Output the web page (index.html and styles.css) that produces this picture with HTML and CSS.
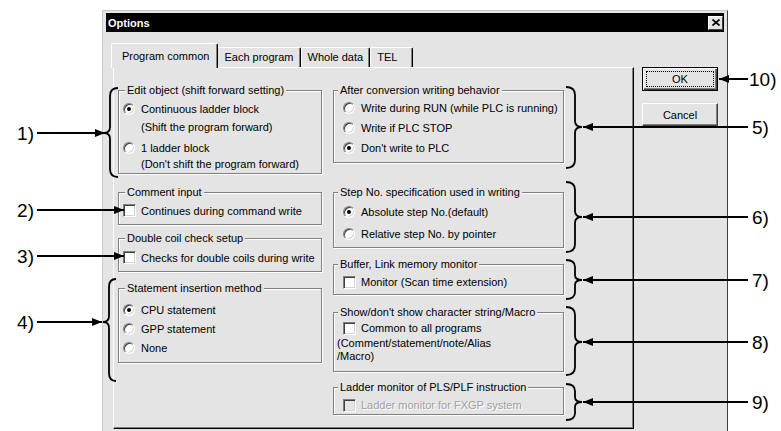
FILE: index.html
```html
<!DOCTYPE html>
<html lang="en">
<head>
    <meta charset="UTF-8">
    <title>Options</title>
    <link rel="stylesheet" href="styles.css">
</head>
<body>

<div class="dialog">
    <div class="titlebar">
        <span class="title">Options</span>
        <span class="close">
            <svg width="8" height="7" viewBox="0 0 8 7"><path d="M0.5 0.5L7.5 6.5M7.5 0.5L0.5 6.5" stroke="#000" stroke-width="1.6"/></svg>
        </span>
    </div>

    <div class="dialog-body">
        <div class="tabs">
            <div class="tab-strip">
                <div class="tab tab-active">Program common</div>
                <div class="tab">Each program</div>
                <div class="tab">Whole data</div>
                <div class="tab tab-tel">TEL</div>
            </div>

            <div class="tab-panel">
                <div class="col col-left">
                    <fieldset class="g-edit">
                        <legend>Edit object (shift forward setting)</legend>
                        <div class="opt"><span class="radio on"></span>Continuous ladder block</div>
                        <div class="note">(Shift the program forward)</div>
                        <div class="opt"><span class="radio"></span>1 ladder block</div>
                        <div class="note">(Don't shift the program forward)</div>
                    </fieldset>

                    <fieldset class="g-comment">
                        <legend>Comment input</legend>
                        <div class="opt"><span class="check"></span>Continues during command write</div>
                    </fieldset>

                    <fieldset class="g-coil">
                        <legend>Double coil check setup</legend>
                        <div class="opt"><span class="check"></span>Checks for double coils during write</div>
                    </fieldset>

                    <fieldset class="g-statement">
                        <legend>Statement insertion method</legend>
                        <div class="opt"><span class="radio on"></span>CPU statement</div>
                        <div class="opt"><span class="radio"></span>GPP statement</div>
                        <div class="opt"><span class="radio"></span>None</div>
                    </fieldset>
                </div>

                <div class="col col-right">
                    <fieldset class="g-after">
                        <legend>After conversion writing behavior</legend>
                        <div class="opt"><span class="radio"></span>Write during RUN (while PLC is running)</div>
                        <div class="opt"><span class="radio"></span>Write if PLC STOP</div>
                        <div class="opt"><span class="radio on"></span>Don't write to PLC</div>
                    </fieldset>

                    <fieldset class="g-step">
                        <legend>Step No. specification used in writing</legend>
                        <div class="opt"><span class="radio on"></span>Absolute step No.(default)</div>
                        <div class="opt"><span class="radio"></span>Relative step No. by pointer</div>
                    </fieldset>

                    <fieldset class="g-buffer">
                        <legend>Buffer, Link memory monitor</legend>
                        <div class="opt"><span class="check"></span>Monitor (Scan time extension)</div>
                    </fieldset>

                    <fieldset class="g-show">
                        <legend>Show/don't show character string/Macro</legend>
                        <div class="opt"><span class="check"></span>Common to all programs</div>
                        <div class="note-flush">(Comment/statement/note/Alias</div>
                        <div class="note-flush">/Macro)</div>
                    </fieldset>

                    <fieldset class="g-ladder">
                        <legend>Ladder monitor of PLS/PLF instruction</legend>
                        <div class="opt disabled"><span class="check"></span>Ladder monitor for FXGP system</div>
                    </fieldset>
                </div>
            </div>
        </div>

        <div class="buttons">
            <button class="btn btn-default"><span class="focus">OK</span></button>
            <button class="btn">Cancel</button>
        </div>
    </div>
</div>

<!-- callouts drawn over the dialog -->
<svg class="notes" width="781" height="431" viewBox="0 0 781 431">
    <defs>
        <marker id="head" viewBox="0 0 10 8" refX="10" refY="4" markerWidth="10" markerHeight="8" markerUnits="userSpaceOnUse" orient="auto">
            <path d="M0 0L10 4L0 8z" fill="#000"/>
        </marker>
    </defs>
    <g class="braces">
        <path d="M118 88Q110 88 110 96L110 127Q110 133 104 133Q110 133 110 139L110 169Q110 177 118 177"/>
        <path d="M116 279Q109 279 109 287L109 316Q109 322 103 322Q109 322 109 328L109 373Q109 381 116 381"/>
        <path d="M566 87Q575 87 575 95L575 121Q575 127 582 127Q575 127 575 133L575 160Q575 168 566 168"/>
        <path d="M566 182Q575 182 575 190L575 211Q575 217 582 217Q575 217 575 223L575 244Q575 252 566 252"/>
        <path d="M566 260Q575 260 575 267L575 275Q575 280 582 280Q575 280 575 285L575 292Q575 299 566 299"/>
        <path d="M566 307Q575 307 575 315L575 336Q575 342 582 342Q575 342 575 348L575 367Q575 375 566 375"/>
        <path d="M566 384Q575 384 575 391L575 397Q575 402 582 402Q575 402 575 407L575 413Q575 420 566 420"/>
    </g>
    <g class="arrows">
        <line x1="37" y1="133" x2="105" y2="133"/>
        <line x1="37" y1="210" x2="124" y2="210"/>
        <line x1="37" y1="256" x2="124" y2="256"/>
        <line x1="37" y1="322" x2="102" y2="322"/>
        <line x1="748" y1="127" x2="583" y2="127"/>
        <line x1="748" y1="217" x2="583" y2="217"/>
        <line x1="748" y1="280" x2="583" y2="280"/>
        <line x1="748" y1="342" x2="583" y2="342"/>
        <line x1="748" y1="402" x2="583" y2="402"/>
        <line x1="748" y1="79" x2="719" y2="79"/>
    </g>
    <g class="labels">
        <text x="34" y="140" text-anchor="end">1)</text>
        <text x="34" y="217" text-anchor="end">2)</text>
        <text x="34" y="263" text-anchor="end">3)</text>
        <text x="34" y="329" text-anchor="end">4)</text>
        <text x="752" y="134">5)</text>
        <text x="752" y="224">6)</text>
        <text x="752" y="287">7)</text>
        <text x="752" y="349">8)</text>
        <text x="752" y="409">9)</text>
        <text x="749" y="86">10)</text>
    </g>
</svg>

</body>
</html>
```

FILE: styles.css
```css
* {
    box-sizing: border-box;
}

body {
    margin: 0;
    height: 431px;
    overflow: hidden;
    background-color: #fff;
    font-family: "Liberation Sans", Arial, sans-serif;
    font-size: 11px;
    color: #000;
}

.dialog {
    width: 626px;
    height: 440px;
    margin: 10px 0 0 102px;
    padding: 2px 3px;
    background-color: #e4e4e4;
    border: 1px solid;
    border-color: #c8c8c8 #404040 #404040 #c8c8c8;
}

.titlebar {
    height: 19px;
    background-color: #000;
    display: flex;
    align-items: center;
    justify-content: space-between;
    padding: 0 1px 0 2px;
}

.title {
    color: #fff;
    font-weight: bold;
}

.close {
    width: 15px;
    height: 14px;
    background-color: #e4e4e4;
    border: 1px solid;
    border-color: #fff #404040 #404040 #fff;
    display: flex;
    align-items: center;
    justify-content: center;
}

.dialog-body {
    display: flex;
    gap: 8px;
    padding: 11px 0 0 7px;
}

.tabs {
    width: 521px;
}

.tab-strip {
    display: flex;
    align-items: flex-end;
    height: 24px;
}

.tab {
    height: 20px;
    line-height: 19px;
    padding: 0 6px;
    border: 1px solid;
    border-bottom: 0;
    border-color: #fff #000 transparent #fff;
    border-radius: 2px 2px 0 0;
    box-shadow: inset -1px 0 0 #808080;
}

.tab-active {
    position: relative;
    z-index: 1;
    height: 25px;
    margin: 0 -1px -1px -2px;
    padding: 3px 8px 0 10px;
    background-color: #e4e4e4;
}

.tab-tel {
    min-width: 43px;
}

.tab-panel {
    height: 362px;
    display: flex;
    gap: 11px;
    padding: 15px 0 0 4px;
    border: 1px solid;
    border-color: #fff #000 #000 #fff;
    box-shadow: inset -1px -1px 0 #808080;
}

.col {
    display: flex;
    flex-direction: column;
}

.col-left {
    width: 204px;
}

.col-right {
    width: 231px;
}

fieldset {
    margin: 0;
    min-width: 0;
    padding: 0 0 0 4px;
    border: 1px solid #808080;
    box-shadow: inset 1px 1px 0 #fff, 1px 1px 0 #fff;
}

.col-right fieldset {
    padding-left: 2px;
}

legend {
    margin-left: 2px;
    padding: 0 2px;
    line-height: 14px;
    background-color: #e4e4e4;
}

.opt {
    display: flex;
    align-items: center;
    height: 19px;
    white-space: nowrap;
}

.col-right .opt {
    height: 20px;
    margin-left: 7px;
}

.note {
    height: 18px;
    line-height: 18px;
    padding-left: 18px;
    white-space: nowrap;
}

.note-flush {
    line-height: 13px;
    margin-left: 1px;
}

/* radio and check boxes, classic sunken look */
.radio {
    position: relative;
    flex: none;
    width: 12px;
    height: 12px;
    margin-right: 6px;
    border-radius: 50%;
    background-color: #fff;
    border: 1px solid;
    border-color: #808080 #fff #fff #808080;
    box-shadow: inset 1px 1px 0 #404040, inset -1px -1px 0 #d4d4d4;
}

.radio.on::after {
    content: "";
    position: absolute;
    left: 3px;
    top: 3px;
    width: 4px;
    height: 4px;
    border-radius: 50%;
    background-color: #000;
}

.check {
    flex: none;
    width: 13px;
    height: 13px;
    margin-right: 5px;
    background-color: #fff;
    border: 1px solid;
    border-color: #808080 #fff #fff #808080;
    box-shadow: inset 1px 1px 0 #404040, inset -1px -1px 0 #d4d4d4;
}

.opt.disabled {
    color: #a0a0a0;
    text-shadow: 1px 1px 0 #fff;
}

.opt.disabled .check {
    background-color: #e4e4e4;
}

/* group spacing */
.g-edit {
    padding-top: 2px;
}

.g-edit .note + .opt {
    margin-top: 2px;
}

.g-edit .note:last-child {
    height: 16px;
    line-height: 14px;
}

.g-comment {
    margin-top: 11px;
    padding-top: 2px;
    padding-bottom: 4px;
}

.g-coil {
    margin-top: 6px;
    padding-top: 3px;
    padding-bottom: 4px;
}

.g-statement {
    margin-top: 9px;
    padding-top: 5px;
    padding-bottom: 5px;
}

.g-after {
    padding-top: 1px;
    padding-bottom: 4px;
}

.g-step {
    margin-top: 22px;
    padding-top: 3px;
    padding-bottom: 3px;
}

.g-step .opt + .opt {
    margin-top: 2px;
}

.g-buffer {
    margin-top: 9px;
    padding-top: 1px;
    padding-bottom: 2px;
}

.g-show {
    margin-top: 10px;
    padding-bottom: 8px;
}

.g-show .opt,
.g-ladder .opt {
    height: 18px;
}

.g-ladder {
    margin-top: 8px;
    padding-top: 2px;
}

/* buttons */
.buttons {
    display: flex;
    flex-direction: column;
    width: 76px;
    padding-top: 24px;
}

.btn {
    height: 23px;
    padding: 0;
    font-family: inherit;
    font-size: 11px;
    color: #000;
    background-color: #e4e4e4;
    border: 1px solid;
    border-color: #fff #404040 #404040 #fff;
    box-shadow: inset -1px -1px 0 #808080;
}

.btn + .btn {
    margin-top: 12px;
}

.btn-default {
    height: 24px;
    padding: 3px;
    border-color: #000;
    box-shadow: inset 1px 1px 0 #fff, inset -1px -1px 0 #404040, inset -2px -2px 0 #808080;
}

.focus {
    display: block;
    height: 100%;
    line-height: 14px;
    border: 1px dotted #000;
}

/* callout overlay */
.notes {
    position: absolute;
    left: 0;
    top: 0;
    pointer-events: none;
}

.braces path {
    fill: none;
    stroke: #000;
    stroke-width: 1.8;
}

.arrows line {
    stroke: #000;
    stroke-width: 2;
    marker-end: url(#head);
}

.labels text {
    font-family: "Liberation Sans", Arial, sans-serif;
    font-size: 19px;
    fill: #000;
}
```
